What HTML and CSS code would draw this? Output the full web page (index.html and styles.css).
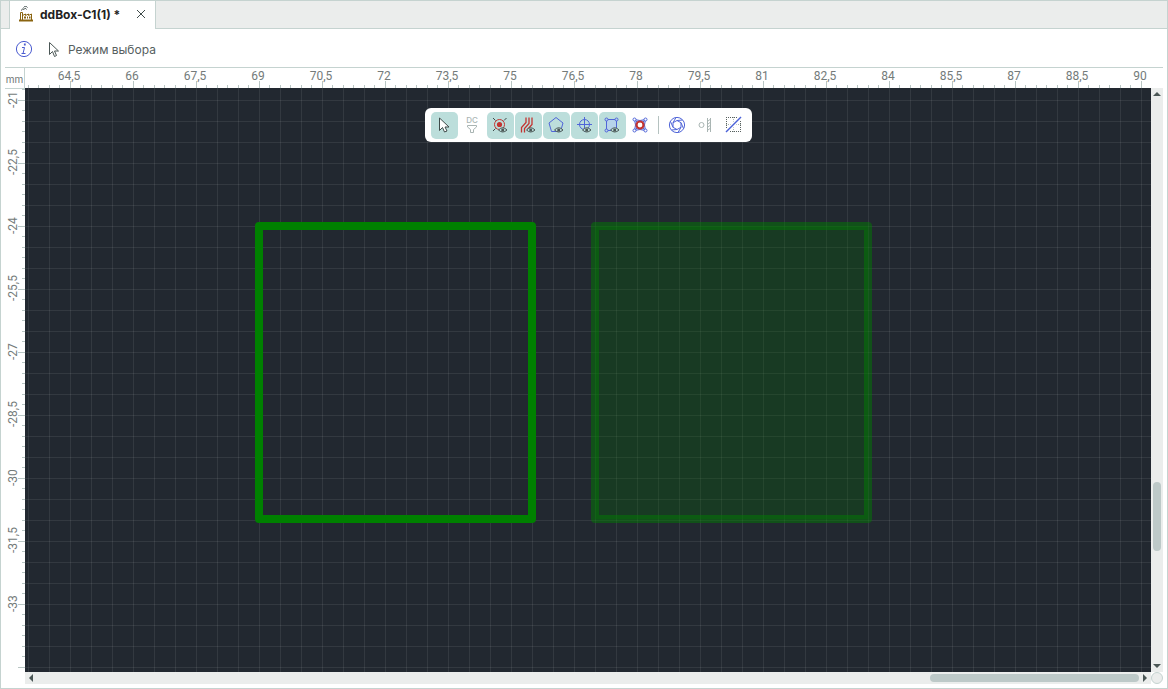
FILE: index.html
```html
<!DOCTYPE html>
<html lang="ru">
<head>
<meta charset="utf-8">
<title>ddBox-C1(1)</title>
<link rel="stylesheet" href="styles.css">
</head>
<body>
<div class="app">
  <header class="tabs">
    <div class="tab">
      <svg class="tab-icon" width="16" height="16" viewBox="0 0 16 16" fill="none">
        <path d="M3.500 4.500C3.500 3 5 2.500 6 3.500C6.500 2 8 2 8.500 3.500" stroke="#3f4b4a"/>
        <path d="M5.500 1.500C6.500 0 8.500 0 9.500 1.500" stroke="#3f4b4a"/>
        <path d="M2.500 14V6.500H4.500V14M4.500 9.500L7.500 8V9.500L10.500 8V9.500L13.500 8V14" stroke="#8a6410"/>
        <path d="M1 14.500H15" stroke="#8a6410" stroke-width="2"/>
        <path d="M6 11.500H8M9 11.500H10M11 11.500H12.500" stroke="#8a6410" stroke-width="2"/>
      </svg>
      <span class="tab-title">ddBox-C1(1) *</span>
      <button class="close" aria-label="Закрыть">
        <svg width="10" height="10" viewBox="0 0 10 10"><path d="M1 1L9 9M9 1L1 9" stroke="#3f4b4a"/></svg>
      </button>
    </div>
  </header>

  <div class="mode">
    <svg width="18" height="18" viewBox="0 0 18 18" fill="none" stroke="#4a5bd0">
      <circle cx="9" cy="9" r="7.600"/>
      <path d="M7 7.500H9.500L8 13.500H10.500M6.500 13.500H8.500"/>
      <path d="M9.800 3.500V5.500" stroke-width="1.800"/>
    </svg>
    <svg class="mode-cursor" width="14" height="17" viewBox="0 0 14 17" fill="none" stroke="#4a5655">
      <path d="M2.500 1.500V13.500L5.500 10.500L7.500 15.500L9.500 14.500L7.500 10H11.500Z"/>
    </svg>
    <span>Режим выбора</span>
  </div>

  <main class="editor">
    <div class="corner">mm</div>
    <div class="ruler-x">
      <span>64,5</span><span>66</span><span>67,5</span><span>69</span><span>70,5</span><span>72</span><span>73,5</span><span>75</span><span>76,5</span><span>78</span><span>79,5</span><span>81</span><span>82,5</span><span>84</span><span>85,5</span><span>87</span><span>88,5</span><span>90</span>
    </div>
    <div class="ruler-y">
      <span>-21</span><span>-22,5</span><span>-24</span><span>-25,5</span><span>-27</span><span>-28,5</span><span>-30</span><span>-31,5</span><span>-33</span>
    </div>

    <section class="canvas">
      <svg class="scene" width="100%" height="100%">
        <g stroke="#008000" stroke-width="8" stroke-linejoin="round">
          <rect x="234" y="138" width="273" height="293" fill="none"/>
          <rect x="570" y="138" width="273" height="293" fill="#006b00" fill-opacity=".27" stroke-opacity=".48"/>
        </g>
      </svg>
      <div class="toolbar" role="toolbar">
        <button class="tool on" aria-label="Выбор">
          <svg viewBox="0 0 18 18" fill="#fff" stroke="#3f4b4a"><path d="M4.500 2V14.500L7.500 11.500L9.500 16L12 15L10 11H14Z"/></svg>
        </button>
        <button class="tool" aria-label="DC">
          <svg viewBox="0 0 18 18" fill="none" stroke="#a9b5b3"><text class="dc" x="9" y="7" text-anchor="middle">DC</text><path d="M4.500 9.500H13.500V11L10.500 13.500V16.500H7.500V13.500L4.500 11Z"/></svg>
        </button>
        <button class="tool on" aria-label="Контактные площадки">
          <svg viewBox="0 0 18 18" fill="none"><path d="M2 2L4.500 4.500M15.500 2L13 4.500M2 15L4.500 12.500" stroke="#3f4b4a"/><circle cx="8.500" cy="8.500" r="5" stroke="#c33431"/><circle cx="8.500" cy="8.500" r="2.600" fill="#c33431"/><use href="#eye"/></svg>
        </button>
        <button class="tool on" aria-label="Дорожки">
          <svg viewBox="0 0 18 18" fill="none"><path d="M2.500 16.500V11.500L7 6.500V1.500M5.500 16.500V12.500L10 7.500V1.500M8.500 13.500L13 8.500V1.500" stroke="#c33431" stroke-width="1.300"/><use href="#eye"/></svg>
        </button>
        <button class="tool on" aria-label="Области">
          <svg viewBox="0 0 18 18" fill="none"><path d="M9 1.500L16 7L13.500 15.500H4.500L2 7Z" stroke="#5065d8"/><use href="#eye"/></svg>
        </button>
        <button class="tool on" aria-label="Отверстия">
          <svg viewBox="0 0 18 18" fill="none"><path d="M9.500 1V16M2 8.500H17" stroke="#5065d8"/><circle cx="9.500" cy="8.500" r="5" stroke="#5065d8"/><use href="#eye"/></svg>
        </button>
        <button class="tool on" aria-label="Контуры">
          <svg viewBox="0 0 18 18" fill="none" stroke="#5065d8"><path d="M3.500 3.500H13.500V14.500H3.500Z" fill="#b7d3ea"/><g fill="#b7d3ea"><circle cx="3.500" cy="3.500" r="1.500"/><circle cx="13.500" cy="3.500" r="1.500"/><circle cx="3.500" cy="14.500" r="1.500"/></g><use href="#eye" stroke="none"/></svg>
        </button>
        <button class="tool" aria-label="Привязка">
          <svg viewBox="0 0 18 18" fill="#c9d4f6" stroke="#5065d8"><path d="M3.500 3.500Q9 5.500 14.500 3.500Q12.500 9 14.500 14.500Q9 12.500 3.500 14.500Q5.500 9 3.500 3.500ZM3.500 3.500L14.500 14.500M14.500 3.500L3.500 14.500"/><g fill="#fff"><circle cx="3.500" cy="3.500" r="1.500"/><circle cx="14.500" cy="3.500" r="1.500"/><circle cx="3.500" cy="14.500" r="1.500"/><circle cx="14.500" cy="14.500" r="1.500"/></g><circle cx="9" cy="9" r="3.500" fill="#fff" stroke="#c33431" stroke-width="2.200"/></svg>
        </button>
        <span class="sep"></span>
        <button class="tool" aria-label="Диафрагма">
          <svg viewBox="0 0 18 18" fill="none" stroke="#5065d8"><circle cx="9" cy="9" r="7.600"/><path d="M9 4.500L13 6.700V11.300L9 13.500L5 11.300V6.700ZM9 4.500L14.500 4M13 6.700L15.500 12.500M13 11.300L10 16.500M9 13.500L3.500 14M5 11.300L2.500 5.500M5 6.700L8 1.500"/></svg>
        </button>
        <button class="tool" aria-label="Зазоры">
          <svg viewBox="0 0 18 18" fill="none" stroke="#a9b5b3"><circle cx="5.500" cy="9" r="2.500"/><path d="M11.500 2V16M14.500 2V16M12 5L14 3.500M12 8L14 6.500M12 11L14 9.500M12 14L14 12.500"/></svg>
        </button>
        <button class="tool" aria-label="Линия">
          <svg viewBox="0 0 18 18" fill="none"><path d="M2 1.500H17M2 15.500H17M2.500 1V16M16.500 1V16" stroke="#59615f" stroke-dasharray="1 1"/><path d="M2 8.500H17M9.500 1V16" stroke="#a9b5b3" stroke-dasharray="1 1"/><path d="M2 16L17 1" stroke="#fff" stroke-width="4"/><path d="M2 16L17 1" stroke="#4a61d8" stroke-width="1.400"/></svg>
        </button>
      </div>
    </section>

    <div class="bar-y">
      <svg width="8" height="4" viewBox="0 0 8 4"><path d="M0 4L4 0L8 4Z"/></svg>
      <span class="before-y"></span><span class="thumb-y"></span><span class="after-y"></span>
      <svg width="8" height="4" viewBox="0 0 8 4"><path d="M0 0H8L4 4Z"/></svg>
    </div>
    <div class="bar-x">
      <svg width="4" height="8" viewBox="0 0 4 8"><path d="M4 0V8L0 4Z"/></svg>
      <span class="before-x"></span><span class="thumb-x"></span>
      <svg width="4" height="8" viewBox="0 0 4 8"><path d="M0 0L4 4L0 8Z"/></svg>
    </div>
    <button class="grip" aria-label="Обзор"></button>
  </main>
</div>
<svg width="0" height="0" class="defs">
  <defs>
    <g id="eye"><path d="M7.500 14Q11.700 9.500 16 14Q11.700 18 7.500 14Z" fill="#bcdedb" stroke="#4a5655"/><circle cx="11.700" cy="13.900" r="1.500" fill="#4a5655" stroke="none"/></g>
  </defs>
</svg>
</body>
</html>
```
FILE: styles.css
```css
* { box-sizing: border-box; }

body {
  margin: 0;
  font-family: Inter, "Open Sans", sans-serif;
  font-size: 12px;
  color: #56605f;
  background: #fff;
}

button {
  border: 0;
  padding: 0;
  background: none;
  font: inherit;
}

svg { display: block; }

.defs { position: absolute; }

.app {
  display: flex;
  flex-direction: column;
  height: 100vh;
  border: 1px solid #c5d3d0;
}

.tabs {
  display: flex;
  height: 28px;
  padding-left: 8px;
  background: linear-gradient(#c5d3d0, #c5d3d0) bottom / 100% 1px no-repeat #ebedec;
}

.tab {
  display: flex;
  align-items: center;
  padding: 0 9px 2px 8px;
  border-left: 1px solid #c5d3d0;
  border-right: 1px solid #c5d3d0;
  background: #fff;
}

.tab-title {
  margin-left: 6px;
  font-weight: 700;
  color: #222;
}

.close { margin-left: 16px; }

.mode {
  display: flex;
  align-items: center;
  height: 38px;
  padding: 2px 14px 0;
}

.mode-cursor { margin: 0 7px 0 14px; }

.editor {
  flex: 1;
  display: grid;
  grid-template-columns: 20px 1fr 12px;
  grid-template-rows: 20px 1fr 12px;
  margin: 0 4px 4px;
  border-top: 1px solid #c5d3d0;
  min-height: 0;
}

.corner {
  border-right: 1px solid #c5d3d0;
  padding-top: 5px;
  font-size: 10px;
  text-align: center;
  color: #707776;
}

.ruler-x,
.ruler-y {
  display: flex;
  font-family: Roboto, sans-serif;
  font-size: 12px;
  line-height: 16px;
  color: #747b7a;
  white-space: nowrap;
}

.ruler-x {
  grid-column: 2 / 4;
  gap: 33px;
  padding-left: 29px;
  background:
    repeating-linear-gradient(90deg, #b9c6c4 0 1px, transparent 1px 63px) 45px 100% / 100% 7px no-repeat,
    repeating-linear-gradient(90deg, transparent 0 3px, #b9c6c4 3px 4px, transparent 4px 13px, #b9c6c4 13px 14px, transparent 14px 21px) 0 100% / 1126px 3px no-repeat;
}

.ruler-x span {
  flex: 0 0 30px;
  display: flex;
  justify-content: center;
}

.ruler-y {
  grid-row: 2 / 4;
  flex-direction: column;
  gap: 40px;
  min-height: 0;
  overflow: hidden;
  background:
    linear-gradient(#c5d3d0, #c5d3d0) top / 100% 1px no-repeat,
    repeating-linear-gradient(#b9c6c4 0 1px, transparent 1px 63px) 100% 12px / 7px 100% no-repeat,
    repeating-linear-gradient(transparent 0 1px, #b9c6c4 1px 2px, transparent 2px 12px, #b9c6c4 12px 13px, transparent 13px 21px) 100% 0 / 3px 584px no-repeat;
}

.ruler-y span {
  flex: 0 0 23px;
  height: 23px;
  min-height: 0;
  width: 15px;
  display: flex;
  align-items: center;
  justify-content: center;
  writing-mode: vertical-rl;
  transform: rotate(180deg);
}

.canvas {
  position: relative;
  background:
    repeating-linear-gradient(90deg, transparent 0 3px, rgba(255, 255, 255, .08) 3px 4px, transparent 4px 21px),
    repeating-linear-gradient(transparent 0 12px, rgba(255, 255, 255, .08) 12px 13px, transparent 13px 21px),
    #222830;
  overflow: hidden;
}

.scene {
  position: absolute;
  inset: 0;
}

.toolbar {
  position: relative;
  display: flex;
  align-items: center;
  gap: 1px;
  width: max-content;
  height: 34px;
  margin: 20px auto 0;
  padding: 0 5px 0 6px;
  border-radius: 6px;
  background: #fff;
}

.tool {
  display: flex;
  align-items: center;
  justify-content: center;
  width: 27px;
  height: 27px;
  border-radius: 5px;
}

.tool svg {
  width: 18px;
  height: 18px;
}

.tool.on { background: #bcdedb; }

.dc {
  font-size: 8px;
  font-weight: 500;
  fill: #a9b5b3;
  stroke: none;
}

.sep {
  width: 1px;
  height: 18px;
  margin: 0 4px 0 3px;
  background: #b5c2c0;
}

.bar-y,
.bar-x {
  display: flex;
  align-items: center;
  background: #ebedec;
  fill: #4a5655;
}

.bar-y {
  flex-direction: column;
  padding: 4px 0;
}

.bar-x {
  grid-column: 2;
  padding: 0 4px;
}

.before-y { flex: 386; }

.thumb-y {
  flex: 69;
  width: 8px;
  border-radius: 4px;
  background: #bdc9c8;
}

.after-y { flex: 113; }

.before-x { flex: 897; }

.thumb-x {
  flex: 209;
  height: 8px;
  margin-right: 4px;
  border-radius: 4px;
  background: #bdc9c8;
}

.grip {
  width: 12px;
  height: 12px;
  border: 1px solid #c5d3d0;
  border-radius: 50%;
  background: #ebedec;
}
```
